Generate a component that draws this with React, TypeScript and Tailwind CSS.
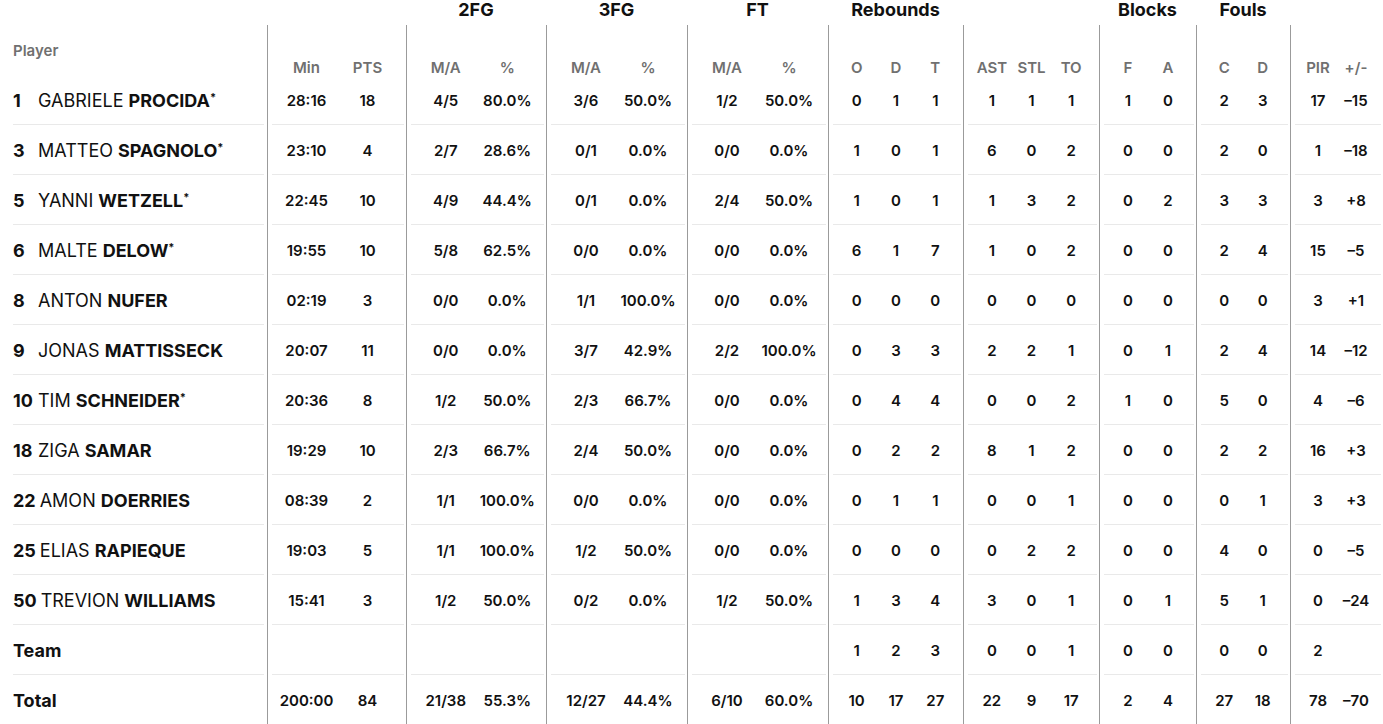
import React from "react";

type Group = { title: string; w: string; cols: string[] };

const groups: Group[] = [
  { title: "", w: "w-[139px]", cols: ["Min", "PTS"] },
  { title: "2FG", w: "w-[140px]", cols: ["M/A", "%"] },
  { title: "3FG", w: "w-[141px]", cols: ["M/A", "%"] },
  { title: "FT", w: "w-[141px]", cols: ["M/A", "%"] },
  { title: "Rebounds", w: "w-[135px]", cols: ["O", "D", "T"] },
  { title: "", w: "w-[136px]", cols: ["AST", "STL", "TO"] },
  { title: "Blocks", w: "w-[97px]", cols: ["F", "A"] },
  { title: "Fouls", w: "w-[94px]", cols: ["C", "D"] },
  { title: "", w: "w-[93px]", cols: ["PIR", "+/-"] },
];

type Player = { no: string; first: string; last: string; starter: boolean; stats: string[] };

const players: Player[] = [
  { no: "1", first: "GABRIELE", last: "PROCIDA", starter: true, stats: ["28:16", "18", "4/5", "80.0%", "3/6", "50.0%", "1/2", "50.0%", "0", "1", "1", "1", "1", "1", "1", "0", "2", "3", "17", "–15"] },
  { no: "3", first: "MATTEO", last: "SPAGNOLO", starter: true, stats: ["23:10", "4", "2/7", "28.6%", "0/1", "0.0%", "0/0", "0.0%", "1", "0", "1", "6", "0", "2", "0", "0", "2", "0", "1", "–18"] },
  { no: "5", first: "YANNI", last: "WETZELL", starter: true, stats: ["22:45", "10", "4/9", "44.4%", "0/1", "0.0%", "2/4", "50.0%", "1", "0", "1", "1", "3", "2", "0", "2", "3", "3", "3", "+8"] },
  { no: "6", first: "MALTE", last: "DELOW", starter: true, stats: ["19:55", "10", "5/8", "62.5%", "0/0", "0.0%", "0/0", "0.0%", "6", "1", "7", "1", "0", "2", "0", "0", "2", "4", "15", "–5"] },
  { no: "8", first: "ANTON", last: "NUFER", starter: false, stats: ["02:19", "3", "0/0", "0.0%", "1/1", "100.0%", "0/0", "0.0%", "0", "0", "0", "0", "0", "0", "0", "0", "0", "0", "3", "+1"] },
  { no: "9", first: "JONAS", last: "MATTISSECK", starter: false, stats: ["20:07", "11", "0/0", "0.0%", "3/7", "42.9%", "2/2", "100.0%", "0", "3", "3", "2", "2", "1", "0", "1", "2", "4", "14", "–12"] },
  { no: "10", first: "TIM", last: "SCHNEIDER", starter: true, stats: ["20:36", "8", "1/2", "50.0%", "2/3", "66.7%", "0/0", "0.0%", "0", "4", "4", "0", "0", "2", "1", "0", "5", "0", "4", "–6"] },
  { no: "18", first: "ZIGA", last: "SAMAR", starter: false, stats: ["19:29", "10", "2/3", "66.7%", "2/4", "50.0%", "0/0", "0.0%", "0", "2", "2", "8", "1", "2", "0", "0", "2", "2", "16", "+3"] },
  { no: "22", first: "AMON", last: "DOERRIES", starter: false, stats: ["08:39", "2", "1/1", "100.0%", "0/0", "0.0%", "0/0", "0.0%", "0", "1", "1", "0", "0", "1", "0", "0", "0", "1", "3", "+3"] },
  { no: "25", first: "ELIAS", last: "RAPIEQUE", starter: false, stats: ["19:03", "5", "1/1", "100.0%", "1/2", "50.0%", "0/0", "0.0%", "0", "0", "0", "0", "2", "2", "0", "0", "4", "0", "0", "–5"] },
  { no: "50", first: "TREVION", last: "WILLIAMS", starter: false, stats: ["15:41", "3", "1/2", "50.0%", "0/2", "0.0%", "1/2", "50.0%", "1", "3", "4", "3", "0", "1", "0", "1", "5", "1", "0", "–24"] },
];

const team = ["", "", "", "", "", "", "", "", "1", "2", "3", "0", "0", "1", "0", "0", "0", "0", "2", ""];
const total = ["200:00", "84", "21/38", "55.3%", "12/27", "44.4%", "6/10", "60.0%", "10", "17", "27", "22", "9", "17", "2", "4", "27", "18", "78", "–70"];

function StatCells({ stats, line = true }: { stats: string[]; line?: boolean }) {
  let i = 0;
  return (
    <>
      {groups.map((g, gi) => {
        const vals = g.cols.map(() => stats[i++]);
        return (
          <div key={gi} className={`${g.w} flex shrink-0 border-l border-[#9b9b9b]`}>
            <div
              className={`ml-[4px] mr-[2px] flex flex-1 items-center pl-[4px] pr-[6px] pt-[3px] ${line ? "border-b border-[#e9e9e9]" : ""}`}
            >
              {vals.map((v, vi) => (
                <div key={vi} className="flex-1 text-center text-[15px] font-semibold text-[#111]">
                  {v}
                </div>
              ))}
            </div>
          </div>
        );
      })}
    </>
  );
}

function Row({ label, stats, line = true }: { label: React.ReactNode; stats: string[]; line?: boolean }) {
  return (
    <div className="flex h-[50px]">
      <div className="flex w-[267px] shrink-0">
        <div className={`ml-[13px] mr-[3px] flex flex-1 items-center pt-[1px] ${line ? "border-b border-[#e9e9e9]" : ""}`}>
          {label}
        </div>
      </div>
      <StatCells stats={stats} line={line} />
    </div>
  );
}

export default function App() {
  return (
    <div className="h-[724px] w-[1383px] overflow-hidden bg-white font-['Inter',sans-serif] text-[#111]">
      <div className="flex h-[25px]">
        <div className="w-[267px] shrink-0" />
        {groups.map((g, gi) => (
          <div key={gi} className={`${g.w} shrink-0 text-center text-[18px] font-bold leading-[19px]`}>
            {g.title}
          </div>
        ))}
      </div>

      <div className="flex h-[50px]">
        <div className="w-[267px] shrink-0 pl-[13px] pt-[16px] text-[15px] font-semibold leading-[20px] text-[#707070]">
          Player
        </div>
        {groups.map((g, gi) => (
          <div key={gi} className={`${g.w} flex shrink-0 border-l border-[#9b9b9b] pl-[8px] pr-[8px] pt-[33px]`}>
            {g.cols.map((c) => (
              <div key={c} className="flex-1 text-center text-[15px] font-semibold leading-[20px] text-[#707070]">
                {c}
              </div>
            ))}
          </div>
        ))}
      </div>

      {players.map((p) => (
        <Row
          key={p.no}
          stats={p.stats}
          label={
            <span className="text-[18px]">
              <span className="mr-[4px] inline-block min-w-[21px] font-bold">{p.no}</span>
              {p.first} <span className="font-bold">{p.last}</span>
              {p.starter && <span className="relative top-[-6px] text-[11px] font-bold">*</span>}
            </span>
          }
        />
      ))}

      <Row label={<span className="text-[18px] font-bold">Team</span>} stats={team} />
      <Row label={<span className="text-[18px] font-bold">Total</span>} stats={total} line={false} />
    </div>
  );
}
